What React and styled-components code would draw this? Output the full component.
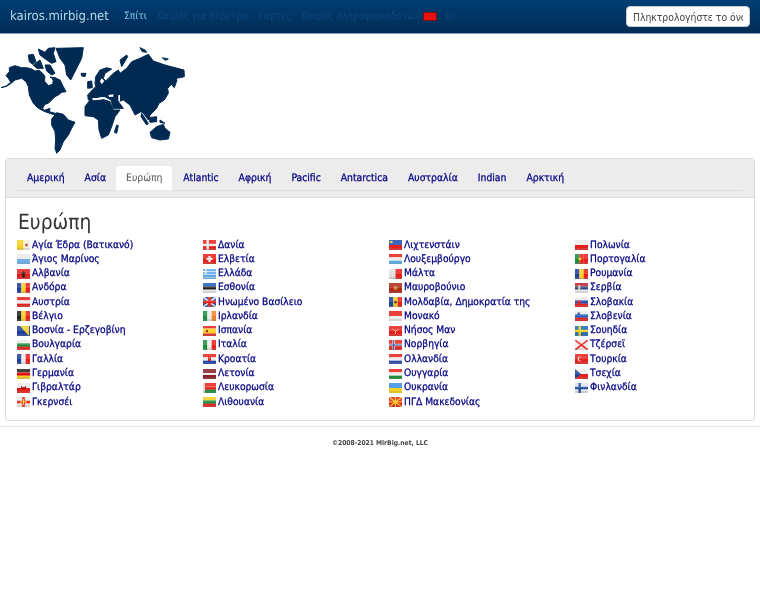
import React from "react";
import styled, { createGlobalStyle } from "styled-components";

const Global = createGlobalStyle`
  html, body { margin: 0; padding: 0; background: #fff; }
  body { font-family: "DejaVu Sans Condensed", "DejaVu Sans", Verdana, sans-serif; font-stretch: condensed; font-size: 10px; color: #333; text-rendering: geometricPrecision; }
`;

const Page = styled.div`
  filter: blur(0.3px);
`;
const Navbar = styled.header`
  display: flex;
  align-items: center;
  height: 33px;
  background: linear-gradient(#003e75, #002c55);
  border-bottom: 1px solid #7f9fb8;
  padding: 0 10px;
  overflow: hidden;
`;
const Brand = styled.a`
  font-size: 13px;
  color: #b8d8e8;
  margin-right: 15px;
  white-space: nowrap;
`;
const NavLink = styled.a`
  font-size: 10.2px;
  color: ${(p) => (p.$active ? "#8cc8e4" : "#0d477e")};
  margin-right: 10px;
  white-space: nowrap;
`;
const NavFlag = styled.span`
  display: block;
  width: 14px;
  height: 9px;
  margin: 0 9px 0 -7px;
  background: #e81010;
  border: 1px solid #7a1010;
  box-sizing: border-box;
`;
const Search = styled.input`
  margin-left: auto;
  width: 124px;
  height: 21px;
  box-sizing: border-box;
  padding: 0 6px;
  border: 1px solid #ccc;
  border-radius: 4px;
  background: #fff;
  font-family: inherit;
  font-stretch: inherit;
  font-size: 10.3px;
  &::placeholder { color: #444; opacity: 1; }
`;
const MapArea = styled.div`
  height: 124px;
  padding-top: 11px;
  box-sizing: border-box;
  overflow: hidden;
`;
const WorldMap = styled.svg`
  display: block;
  width: 190px;
  height: 110px;
  fill: #002a52;
`;
const Land = styled.path`
  stroke: #002a52;
  stroke-width: 3;
  stroke-linejoin: round;
`;
const Sea = styled.path`
  fill: #fff;
`;
const Panel = styled.section`
  margin: 0 5px;
  height: 263px;
  box-sizing: border-box;
  border: 1px solid #ddd;
  border-radius: 3px;
  background: #fff;
`;
const PanelHead = styled.div`
  height: 39px;
  box-sizing: border-box;
  padding: 7px 11px 0;
  background: #ececec;
  border-bottom: 1px solid #ddd;
`;
const Tabs = styled.nav`
  display: flex;
  height: 25px;
  box-sizing: border-box;
  border-bottom: 1px solid #ddd;
`;
const Tab = styled.a`
  display: flex;
  align-items: center;
  height: 24px;
  padding: 0 10px;
  margin-right: ${(p) => (p.$active ? "1px" : "0")};
  color: ${(p) => (p.$active ? "#555" : "#000080")};
  -webkit-text-stroke: ${(p) => (p.$active ? "0" : "0.25px")};
  font-size: 10.3px;
  background: ${(p) => (p.$active ? "#fff" : "transparent")};
  border-radius: 3px 3px 0 0;
  box-shadow: ${(p) => (p.$active ? "0 0 0 1px #e4eef2" : "none")};
  white-space: nowrap;
`;
const PanelBody = styled.div`
  padding: 12px 11px 0;
`;
const Title = styled.h1`
  margin: 0 0 0 1px;
  font-weight: 400;
  font-size: 20.8px;
  line-height: 24px;
  color: #333;
`;
const Columns = styled.div`
  display: grid;
  grid-template-columns: repeat(4, 186px);
  margin-top: 4px;
`;
const Column = styled.ul`
  list-style: none;
  margin: 0;
  padding: 0;
`;
const Country = styled.li`
  display: flex;
  align-items: center;
  height: 14.27px;
  gap: 2px;
  white-space: nowrap;
`;
const CountryLink = styled.a`
  color: #000080;
  font-size: 10.2px;
  -webkit-text-stroke: 0.25px;
`;
const FlagIcon = styled.svg`
  flex: none;
  width: 13px;
  height: 10px;
  display: block;
`;
const Footer = styled.footer`
  margin-top: 5px;
  border-top: 1px solid #e5e5e5;
  padding-top: 12px;
  text-align: center;
  font-size: 6.7px;
  font-weight: 700;
  color: #444;
`;

const h = (...c) => ({ h: c });
const v = (...c) => ({ v: c });
const R = "#e8201c", W = "#ececec", B = "#1c3f9c", G = "#1c8c3c", Y = "#f8d020", K = "#222";

const Cross = ({ bg, fg, inner }) => (
  <>
    <rect width="13" height="10" fill={bg} />
    <rect x="3.5" width="2.4" height="10" fill={fg} />
    <rect y="3.8" width="13" height="2.4" fill={fg} />
    {inner && <rect x="4.2" width="1" height="10" fill={inner} />}
    {inner && <rect y="4.5" width="13" height="1" fill={inner} />}
  </>
);

const flags = {
  "Αγία Έδρα (Βατικανό)": { v: [Y, "#f4f0e0"], x: <circle cx="9.5" cy="5" r="1.4" fill="#c84040" /> },
  "Άγιος Μαρίνος": h(W, "#6fb0e8"),
  "Αλβανία": { h: [R], x: <path d="M6.5 2 8.8 4 7.6 5.2 8 7.8 6.5 8.8 5 7.8 5.4 5.2 4.2 4Z" fill={K} /> },
  "Ανδόρα": v(B, Y, R),
  "Αυστρία": h(R, W, R),
  "Βέλγιο": v(K, Y, R),
  "Βοσνία - Ερζεγοβίνη": { h: [B], x: <path d="M3 0h9v10Z" fill={Y} /> },
  "Βουλγαρία": h(W, G, R),
  "Γαλλία": v(B, W, R),
  "Γερμανία": h(K, "#d00", Y),
  "Γιβραλτάρ": { h: [W, R], x: <path d="M4 6V3h1v1h3V3h1v3Z" fill="#a01010" /> },
  "Γκερνσέι": { h: [W], x: <><rect x="5.2" width="2.6" height="10" fill={R} /><rect y="3.7" width="13" height="2.6" fill={R} /><rect x="6" y="2" width="1" height="6" fill={Y} /><rect x="3" y="4.5" width="7" height="1" fill={Y} /></> },
  "Δανία": { x: <Cross bg={R} fg={W} /> },
  "Ελβετία": { h: [R], x: <><rect x="5.4" y="2" width="2.2" height="6" fill={W} /><rect x="3.5" y="3.9" width="6" height="2.2" fill={W} /></> },
  "Ελλάδα": { x: <><rect width="13" height="10" fill="#5aa6e8" /><rect y="2" width="13" height="1" fill="#bcdcf8" /><rect y="5" width="13" height="1" fill="#bcdcf8" /><rect y="8" width="13" height="1" fill="#bcdcf8" /><rect x="2" width="1.4" height="5" fill={W} /><rect y="2" width="5" height="1.2" fill={W} /></> },
  "Εσθονία": h("#1860c0", K, W),
  "Ηνωμένο Βασίλειο": { x: <><rect width="13" height="10" fill="#2c4c9c" /><path d="M0 0 13 10M13 0 0 10" stroke="#eee" strokeWidth="1.6" /><rect x="5.2" width="2.6" height="10" fill={R} /><rect y="3.7" width="13" height="2.6" fill={R} /></> },
  "Ιρλανδία": v(G, W, "#f08020"),
  "Ισπανία": { h: [R, Y, Y, R], x: <circle cx="4" cy="5" r="1.2" fill="#a02010" /> },
  "Ιταλία": v(G, W, R),
  "Κροατία": { h: [R, W, "#2040b0"], x: <rect x="5" y="3" width="3" height="4" fill="#d03030" /> },
  "Λετονία": h("#8c1c28", "#8c1c28", W, "#8c1c28", "#8c1c28"),
  "Λευκορωσία": { h: [R, R, G], x: <rect width="2" height="10" fill="#f4d0c8" /> },
  "Λιθουανία": h(Y, G, R),
  "Λιχτενστάιν": { h: ["#1c4cb0", R], x: <rect x="1" y="1" width="2.5" height="2" fill={Y} /> },
  "Λουξεμβούργο": h(R, W, "#5ab0e8"),
  "Μάλτα": v("#e0e0e0", R),
  "Μαυροβούνιο": { h: ["#b02818"], x: <circle cx="6.5" cy="5" r="2" fill="#c89030" /> },
  "Μολδαβία, Δημοκρατία της": { v: [B, Y, R], x: <circle cx="6.5" cy="5" r="1.5" fill="#6a4020" /> },
  "Μονακό": h(R, W),
  "Νήσος Μαν": { h: [R], x: <path d="M6.5 5 3.5 3M6.5 5l3-2M6.5 5v3" stroke="#e8c0a0" strokeWidth="1" /> },
  "Νορβηγία": { x: <Cross bg={R} fg={W} inner="#1c3f9c" /> },
  "Ολλανδία": h(R, W, "#2848b0"),
  "Ουγγαρία": h(R, W, G),
  "Ουκρανία": h("#3890e8", Y),
  "ΠΓΔ Μακεδονίας": { h: [R], x: <path d="M6.5 5 0 0M6.5 5 13 0M6.5 5 0 10M6.5 5 13 10M6.5 5V0M6.5 5v5M6.5 5H0M6.5 5h7" stroke={Y} strokeWidth="1.1" /> },
  "Πολωνία": h(W, R),
  "Πορτογαλία": { v: [G, R, R], x: <circle cx="5" cy="5" r="1.6" fill={Y} /> },
  "Ρουμανία": v(B, Y, R),
  "Σερβία": { h: ["#c02030", "#2c4488", W], x: <rect x="3" y="2" width="2.4" height="5" fill="#d8c0a0" /> },
  "Σλοβακία": { h: [W, "#1c48b0", R], x: <circle cx="4" cy="5" r="1.8" fill={R} /> },
  "Σλοβενία": { h: [W, "#1c60c0", R], x: <rect x="2.5" y="1.5" width="2.4" height="3" fill="#1c48b0" /> },
  "Σουηδία": { x: <Cross bg="#1868b8" fg={Y} /> },
  "Τζέρσεϊ": { h: [W], x: <path d="M0 0 13 10M13 0 0 10" stroke={R} strokeWidth="1.6" /> },
  "Τουρκία": { h: [R], x: <><circle cx="5" cy="5" r="2.4" fill={W} /><circle cx="5.8" cy="5" r="1.9" fill={R} /></> },
  "Τσεχία": { h: [W, R], x: <path d="M0 0 6 5 0 10Z" fill="#1c48a0" /> },
  "Φινλανδία": { x: <Cross bg="#e4e4ee" fg="#1c4c98" /> },
};

const Flag = ({ name }) => {
  const f = flags[name] || {};
  const hs = f.h || [];
  const vs = f.v || [];
  return (
    <FlagIcon viewBox="0 0 13 10" preserveAspectRatio="none" aria-hidden="true">
      {hs.map((c, i) => (
        <rect key={i} y={(i * 10) / hs.length} width="13" height={10 / hs.length + 0.1} fill={c} />
      ))}
      {vs.map((c, i) => (
        <rect key={i} x={(i * 13) / vs.length} width={13 / vs.length + 0.1} height="10" fill={c} />
      ))}
      {f.x}
      <rect width="13" height="5" fill="#fff" opacity=".15" />
      <rect y="8" width="13" height="2" fill="#888" opacity=".25" />
    </FlagIcon>
  );
};

const columns = [
  ["Αγία Έδρα (Βατικανό)", "Άγιος Μαρίνος", "Αλβανία", "Ανδόρα", "Αυστρία", "Βέλγιο", "Βοσνία - Ερζεγοβίνη", "Βουλγαρία", "Γαλλία", "Γερμανία", "Γιβραλτάρ", "Γκερνσέι"],
  ["Δανία", "Ελβετία", "Ελλάδα", "Εσθονία", "Ηνωμένο Βασίλειο", "Ιρλανδία", "Ισπανία", "Ιταλία", "Κροατία", "Λετονία", "Λευκορωσία", "Λιθουανία"],
  ["Λιχτενστάιν", "Λουξεμβούργο", "Μάλτα", "Μαυροβούνιο", "Μολδαβία, Δημοκρατία της", "Μονακό", "Νήσος Μαν", "Νορβηγία", "Ολλανδία", "Ουγγαρία", "Ουκρανία", "ΠΓΔ Μακεδονίας"],
  ["Πολωνία", "Πορτογαλία", "Ρουμανία", "Σερβία", "Σλοβακία", "Σλοβενία", "Σουηδία", "Τζέρσεϊ", "Τουρκία", "Τσεχία", "Φινλανδία"],
];
const tabs = ["Αμερική", "Ασία", "Ευρώπη", "Atlantic", "Αφρική", "Pacific", "Antarctica", "Αυστραλία", "Indian", "Αρκτική"];

const land = [
  "M3 128 20 122 32 112 25 100 18 92 28 80 28 68 45 62 65 68 80 68 95 72 105 78 118 76 128 85 135 95 133 108 145 122 158 118 160 105 150 96 165 98 180 105 190 125 198 140 185 142 175 150 165 155 155 165 145 175 135 178 128 190 133 196 150 190 148 200 170 206 168 210 155 207 135 200 115 190 100 175 88 150 85 125 78 110 65 100 45 105 32 116 20 124Z",
  "M85 30 100 28 108 50 98 58 88 50ZM115 12 135 22 145 10 165 8 160 25 168 50 155 55 140 45 120 30ZM100 60 120 45 130 70 110 70ZM135 60 150 60 165 85 155 90 140 78Z",
  "M168 10 250 8 245 40 230 70 212 105 200 90 195 60 180 40ZM243 85 258 85 255 95 245 93Z",
  "M155 222 170 203 190 208 205 225 225 232 215 250 205 270 190 290 180 315 170 325 165 310 167 285 165 260 155 240Z",
  "M263 110 275 108 277 128 263 130Z",
  "M285 115 287 95 300 75 320 68 335 72 315 85 310 100 317 108 340 85 355 75 360 85 380 70 395 50 420 40 445 28 460 48 495 60 525 68 552 75 553 95 530 100 517 115 503 130 505 145 493 165 477 175 470 190 460 200 450 210 445 225 430 205 423 200 405 210 390 180 370 165 355 170 370 190 340 190 333 165 315 155 300 155 285 165 265 165 263 150 277 135 287 125Z",
  "M255 185 270 165 305 162 330 170 340 195 360 195 345 215 335 245 325 270 305 280 297 255 295 225 280 215 255 212Z",
  "M350 240 355 242 350 265 343 262Z",
  "M450 262 470 245 490 238 495 250 510 262 505 282 480 285 455 278Z",
  "M425 205 445 235 440 240 423 215ZM445 218 470 215 470 230 450 232ZM480 225 495 235 480 232Z",
  "M515 120 527 100 531 105 523 128ZM360 45 380 30 383 35 365 65ZM420 8 435 15 440 22 427 20ZM487 38 505 42 495 46Z",
];

const seas = [
  "M325 150 340 148 340 155 327 156Z",
  "M355 150 360 150 360 170 355 168Z",
  "M305 100 313 108 305 118 300 108Z",
  "M142 98 155 100 155 112 146 116 138 106Z",
  "M275 160 300 158 320 160 300 164 280 166Z",
];

export default function App() {
  return (
    <Page>
      <Global />
      <Navbar>
        <Brand>kairos.mirbig.net</Brand>
        <NavLink $active>Σπίτι</NavLink>
        <NavLink>Καιρός για θέρετρο</NavLink>
        <NavLink>Χάρτες</NavLink>
        <NavLink>Καιρός πληροφοριοδοτών</NavLink>
        <NavFlag />
        <NavLink>el</NavLink>
        <Search placeholder="Πληκτρολογήστε το όνομα της πόλης" />
      </Navbar>
      <MapArea>
        <WorldMap viewBox="0 0 570 330" aria-hidden="true">
          {land.map((d) => (
            <Land key={d} d={d} />
          ))}
          {seas.map((d) => (
            <Sea key={d} d={d} />
          ))}
        </WorldMap>
      </MapArea>
      <Panel>
        <PanelHead>
          <Tabs>
            {tabs.map((t) => (
              <Tab key={t} $active={t === "Ευρώπη"}>{t}</Tab>
            ))}
          </Tabs>
        </PanelHead>
        <PanelBody>
          <Title>Ευρώπη</Title>
          <Columns>
            {columns.map((col, i) => (
              <Column key={i}>
                {col.map((name) => (
                  <Country key={name}>
                    <Flag name={name} />
                    <CountryLink>{name}</CountryLink>
                  </Country>
                ))}
              </Column>
            ))}
          </Columns>
        </PanelBody>
      </Panel>
      <Footer>©2008-2021 MirBig.net, LLC</Footer>
    </Page>
  );
}
